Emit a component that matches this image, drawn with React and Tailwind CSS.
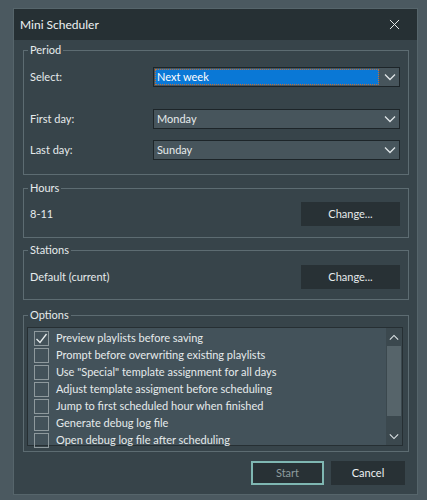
import { X } from "lucide-react"

const font = { fontFamily: 'Lato, "Noto Sans", sans-serif' }

function Chevron({ up, size = 12, color = "#dfe5e7" }) {
  return (
    <svg width={size} height={size / 2 + 2} viewBox="0 0 12 8">
      <path
        d={up ? "M1 6.5 L6 1.5 L11 6.5" : "M1 1.5 L6 6.5 L11 1.5"}
        fill="none"
        stroke={color}
        strokeWidth="1.3"
      />
    </svg>
  )
}

function Dropdown({ value, selected }) {
  return (
    <div className="flex h-[20px] w-[247px] items-stretch border border-[#1d2529] bg-[#47555c]">
      {selected ? (
        <div className="m-px flex flex-1 items-center border border-dotted border-[#c0703a] bg-[#0a78d6] pl-px text-white">
          {value}
        </div>
      ) : (
        <div className="flex flex-1 items-center pl-[3px] text-[#e6ebec]">{value}</div>
      )}
      <div className="flex w-[19px] items-center justify-center">
        <Chevron />
      </div>
    </div>
  )
}

function Group({ title, className, children }) {
  return (
    <fieldset className={"border border-[#5d6c72] " + className}>
      <legend className="ml-[4px] px-[2px] leading-[14px] text-[#e6ebec]">{title}</legend>
      {children}
    </fieldset>
  )
}

function Check({ checked, label }) {
  return (
    <div className="flex h-[17px] items-center gap-[7px] pl-[6px]">
      <div className="flex h-[15px] w-[15px] items-center justify-center border border-[#8e999d]">
        {checked && (
          <svg width="13" height="13" viewBox="0 0 13 13">
            <path d="M1.5 7 L5 10.5 L11.5 2" fill="none" stroke="#e6ebec" strokeWidth="1.3" />
          </svg>
        )}
      </div>
      <span className="text-[#e6ebec]">{label}</span>
    </div>
  )
}

export default function App() {
  const options = [
    ["Preview playlists before saving", true],
    ["Prompt before overwriting existing playlists", false],
    ['Use "Special" template assignment for all days', false],
    ["Adjust template assigment before scheduling", false],
    ["Jump to first scheduled hour when finished", false],
    ["Generate debug log file", false],
    ["Open debug log file after scheduling", false],
  ]

  return (
    <div className="h-[500px] overflow-hidden bg-[#4b5960] pt-[8px] text-[11px]" style={font}>
      <div className="ml-[13px] mr-[9px] border border-[#56656b] bg-[#37444a]">
        <div className="flex h-[31px] items-center justify-between bg-[#263034] pl-[6px] pr-[14px]">
          <span className="text-[12px] text-[#eef2f3]">Mini Scheduler</span>
          <X className="h-[17px] w-[17px] text-[#e6ebec]" strokeWidth={1.4} />
        </div>

        <div className="pl-[9px] pr-[8px] pb-[9px]">
          <Group title="Period" className="mt-[3px] pb-[14px]">
            <div className="flex items-center justify-between pl-[6px] pr-[8px] pt-[10px]">
              <span className="text-[#e6ebec]">Select:</span>
              <Dropdown value="Next week" selected />
            </div>
            <div className="mt-[22px] flex items-center justify-between pl-[6px] pr-[8px]">
              <span className="text-[#e6ebec]">First day:</span>
              <Dropdown value="Monday" />
            </div>
            <div className="mt-[11px] flex items-center justify-between pl-[6px] pr-[8px]">
              <span className="text-[#e6ebec]">Last day:</span>
              <Dropdown value="Sunday" />
            </div>
          </Group>

          <Group title="Hours" className="mt-[6px] pb-[11px]">
            <div className="flex items-center justify-between pl-[6px] pr-[8px] pt-[7px]">
              <span className="text-[#e6ebec]">8-11</span>
              <div className="flex h-[24px] w-[99px] items-center justify-center bg-[#283135] text-[#e6ebec]">
                Change...
              </div>
            </div>
          </Group>

          <Group title="Stations" className="mt-[5px] pb-[10px]">
            <div className="flex items-center justify-between pl-[6px] pr-[8px] pt-[8px]">
              <span className="text-[#e6ebec]">Default (current)</span>
              <div className="flex h-[24px] w-[99px] items-center justify-center bg-[#283135] text-[#e6ebec]">
                Change...
              </div>
            </div>
          </Group>

          <Group title="Options" className="mt-[8px] pb-[5px]">
            <div className="ml-[3px] mr-[5px] mt-[5px] flex h-[119px] border border-[#262f33] bg-[#43525a]">
              <div className="flex-1 pt-[2px]">
                {options.map(([label, checked]) => (
                  <Check key={label} label={label} checked={checked} />
                ))}
              </div>
              <div className="flex w-[16px] flex-col bg-[#3b484e]">
                <div className="flex h-[18px] items-center justify-center">
                  <Chevron up size={10} />
                </div>
                <div className="mx-px h-[70px] bg-[#56646a]" />
                <div className="flex-1" />
                <div className="flex h-[18px] items-center justify-center">
                  <Chevron size={10} />
                </div>
              </div>
            </div>
          </Group>

          <div className="mt-[9px] flex justify-end gap-[7px] pr-[4px]">
            <div className="flex h-[24px] w-[73px] items-center justify-center border-2 border-[#7fb7b2] bg-[#283135] text-[#8e9c9e]">
              Start
            </div>
            <div className="flex h-[24px] w-[74px] items-center justify-center bg-[#283135] text-[#eef2f3]">
              Cancel
            </div>
          </div>
        </div>
      </div>
    </div>
  )
}
